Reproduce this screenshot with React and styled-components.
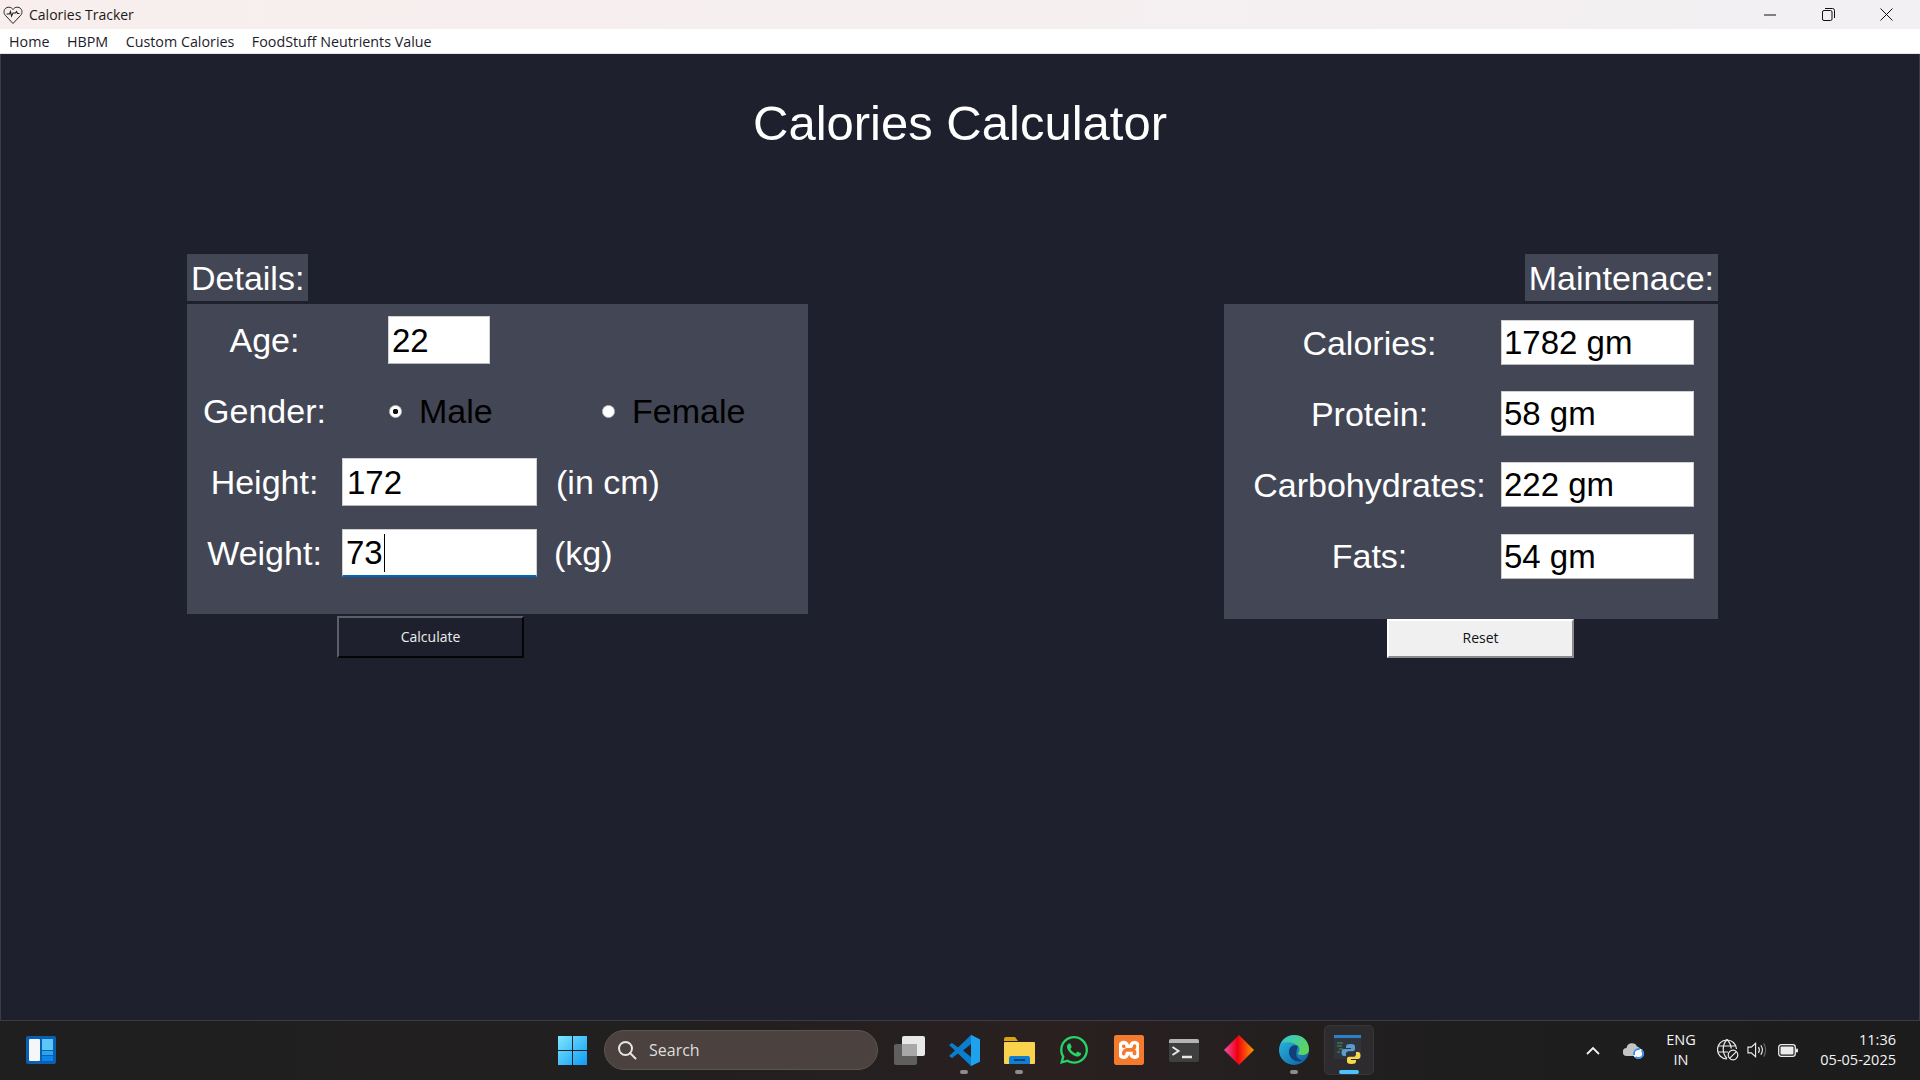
import React from 'react';
import styled, { createGlobalStyle } from 'styled-components';
import { FaWhatsapp } from 'react-icons/fa';
import { SiXampp } from 'react-icons/si';

const GlobalStyle = createGlobalStyle`
  html, body { margin: 0; padding: 0; height: 100%; background: #1e212d; }
  #root { height: 100%; }
  * { box-sizing: border-box; }
`;

const uiFont = `'Open Sans', 'Noto Sans', sans-serif`;
const formFont = `'Liberation Sans', Arial, sans-serif`;

const Page = styled.div`
  width: 1920px;
  height: 1080px;
  display: flex;
  flex-direction: column;
  overflow: hidden;
`;

const TitleBar = styled.div`
  height: 29px;
  display: flex;
  align-items: center;
  padding-left: 3px;
  background: linear-gradient(90deg, #f8eeee 0%, #f6efef 40%, #f2f0f3 100%);
  font-family: ${uiFont};
  font-size: 14px;
  color: #1a1a1a;
`;

const AppTitle = styled.span`
  margin-left: 6px;
`;

const WindowControls = styled.div`
  margin-left: auto;
  padding-right: 5px;
  display: flex;
  height: 100%;
`;

const WindowButton = styled.div`
  width: 58px;
  height: 100%;
  display: flex;
  align-items: center;
  justify-content: center;
`;

const MenuBar = styled.div`
  height: 25px;
  display: flex;
  align-items: center;
  gap: 17.500px;
  padding-left: 9px;
  background: #fff;
  border-bottom: 1px solid #e4e4e4;
  font-family: ${uiFont};
  font-size: 14.300px;
  color: #1c1c2c;
`;

const Content = styled.main`
  flex: 1;
  padding-top: 40px;
  background: #1e212d;
  box-shadow: inset 1px 0 0 #3a3c46, inset -1px 0 0 #3a3c46;
`;

const Heading = styled.h1`
  margin: 0 0 102px;
  height: 58px;
  line-height: 58px;
  text-align: center;
  font-family: ${formFont};
  font-weight: 400;
  font-size: 49px;
  color: #fff;
`;

const Columns = styled.div`
  padding: 0 202px 0 187px;
  display: flex;
  justify-content: space-between;
`;

const Column = styled.section`
  width: ${p => p.$width}px;
  display: flex;
  flex-direction: column;
`;

const Tag = styled.div`
  height: 47px;
  align-self: ${p => (p.$end ? 'flex-end' : 'flex-start')};
  padding: 1px 4px 0;
  display: flex;
  align-items: center;
  background: #434654;
  font-family: ${formFont};
  font-size: 34px;
  color: #fff;
`;

const Panel = styled.div`
  margin-top: 3px;
  height: ${p => p.$height}px;
  padding-top: ${p => p.$top}px;
  padding-left: ${p => p.$left || 0}px;
  display: flex;
  flex-direction: column;
  gap: ${p => p.$gap}px;
  background: #434654;
  font-family: ${formFont};
  font-size: 34px;
`;

const Row = styled.div`
  height: ${p => p.$height}px;
  display: flex;
  align-items: center;
`;

const Label = styled.div`
  width: ${p => p.$width}px;
  flex-shrink: 0;
  padding-top: 1px;
  text-align: center;
  color: #fff;
  white-space: nowrap;
`;

const Field = styled.div`
  width: ${p => p.$width}px;
  height: 100%;
  margin-left: ${p => p.$indent || 0}px;
  padding: 1px 0 0 ${p => p.$pad || 2}px;
  display: flex;
  align-items: center;
  background: #fff;
  color: #000;
  font-size: 33px;
  border: 1px solid #d0d0d0;
  border-bottom: ${p => (p.$focused ? '2px solid #0067c0' : '1px solid #b8b8b8')};
  white-space: nowrap;
`;

const Caret = styled.span`
  width: 1px;
  height: 38px;
  margin-left: 1px;
  background: #000;
`;

const Unit = styled.span`
  margin-left: ${p => p.$gap}px;
  padding-top: 1px;
  color: #fff;
`;

const RadioOption = styled.div`
  width: ${p => p.$width}px;
  margin-left: ${p => p.$indent || 0}px;
  padding: 1px 0 0 1px;
  display: flex;
  align-items: center;
  gap: 17px;
  color: #000;
`;

const RadioDot = styled.span`
  width: 13px;
  height: 13px;
  border-radius: 50%;
  background: radial-gradient(circle, ${p => (p.$checked ? '#111 0 2.500px, #fff 3px' : '#fff 0 5px')});
  border: 1px solid #c4c4c4;
  flex-shrink: 0;
`;

const Button = styled.div`
  width: 187px;
  height: ${p => p.$height}px;
  margin-top: ${p => p.$top}px;
  margin-left: ${p => p.$left}px;
  padding-bottom: 2px;
  display: flex;
  align-items: center;
  justify-content: center;
  font-family: ${uiFont};
  font-size: 14px;
  color: ${p => (p.$light ? '#111' : '#eee')};
  background: ${p => (p.$light ? '#f0f0f0' : '#1e212d')};
  border: 2px solid;
  border-color: ${p => (p.$light ? '#fff #8a8a8a #8a8a8a #fff' : '#5c5e68 #050505 #050505 #5c5e68')};
`;

const Taskbar = styled.footer`
  height: 60px;
  display: flex;
  align-items: center;
  padding: 0 0 1px 26px;
  background: linear-gradient(90deg, #1f1f1f 0%, #221f1f 35%, #2a2020 55%, #1f1e1e 75%, #1c1c1c 100%);
  border-top: 1px solid #3c3c3c;
  font-family: ${uiFont};
`;

const CenterGroup = styled.div`
  margin-left: 502px;
  display: flex;
  align-items: center;
`;

const SearchBox = styled.div`
  width: 274px;
  height: 40px;
  margin: 0 3.500px 0 17px;
  padding-left: 12px;
  display: flex;
  align-items: center;
  gap: 12px;
  border-radius: 20px;
  background: #4b4240;
  border: 1px solid #5c5452;
  font-size: 16px;
  color: #ddd;
`;

const AppSlot = styled.div`
  position: relative;
  width: 55px;
  height: 50px;
  display: flex;
  align-items: center;
  justify-content: center;
  border-radius: 5px;
  &::before {
    content: '';
    position: absolute;
    inset: 0 2.500px;
    border-radius: 5px;
    background: ${p => (p.$active ? '#2e2b2e' : 'transparent')};
    border: 1px solid ${p => (p.$active ? '#393639' : 'transparent')};
  }
  &::after {
    content: '';
    display: ${p => (p.$open || p.$active ? 'block' : 'none')};
    position: absolute;
    bottom: 1px;
    left: 50%;
    transform: translateX(-50%);
    width: ${p => (p.$active ? 20 : 8)}px;
    height: 4px;
    border-radius: 2px;
    background: ${p => (p.$active ? '#4cc2ff' : '#8d8d8d')};
  }
  svg { position: relative; }
`;

const Tray = styled.div`
  margin-left: auto;
  padding-right: 24px;
  display: flex;
  align-items: center;
  color: #f4f4f4;
`;

const TraySlot = styled.div`
  width: ${p => p.$width}px;
  display: flex;
  align-items: center;
  justify-content: center;
`;

const StackedText = styled.div`
  width: ${p => p.$width}px;
  display: flex;
  flex-direction: column;
  align-items: ${p => (p.$right ? 'flex-end' : 'center')};
  font-size: 14.500px;
  line-height: 20px;
  white-space: nowrap;
`;

const AppLogo = () => (
  <svg width="20" height="20" viewBox="0 0 20 20" fill="none" stroke="#222" strokeWidth="1">
    <path d="M10 18.500 2.200 10.200C.3 8 .8 4.500 3 3c2.500-1.500 5.500-.8 7 1.500C11.500 2.200 14.500 1.500 17 3c2.200 1.500 2.700 5 .8 7.200L10 18.500z" />
    <path d="M3.500 9h3l1-2.500 1 4.500 1.500-3h2.500l1-1.500 1 2H16.500" strokeWidth="1.100" />
  </svg>
);

const MinimizeIcon = () => (
  <svg width="12" height="12" viewBox="0 0 12 12"><path d="M0 6h12" stroke="#111" strokeWidth="1" /></svg>
);
const RestoreIcon = () => (
  <svg width="13" height="13" viewBox="0 0 13 13" fill="none" stroke="#111" strokeWidth="1">
    <rect x="0.500" y="2.500" width="9.500" height="10" rx="1.500" />
    <path d="M3 .5h7.500a2 2 0 0 1 2 2V10" />
  </svg>
);
const CloseIcon = () => (
  <svg width="13" height="13" viewBox="0 0 13 13"><path d="M.5.5l12 12M12.500.5l-12 12" stroke="#111" strokeWidth="1" /></svg>
);

const WidgetsIcon = () => (
  <svg width="30" height="28" viewBox="0 0 30 28">
    <rect width="30" height="28" rx="2" fill="#0a5fb4" />
    <rect x="3" y="3" width="11" height="22" rx="1" fill="#f4f6f8" />
    <rect x="16" y="3" width="11" height="11" fill="#5cc6f6" />
    <rect x="16" y="15" width="11" height="4" fill="#2ba4ee" />
    <rect x="16" y="20" width="11" height="5" fill="#0d84e8" />
  </svg>
);

const StartIcon = () => (
  <svg width="29" height="29" viewBox="0 0 29 29">
    <defs>
      <linearGradient id="startA" x1="0" y1="0" x2="1" y2="1">
        <stop offset="0" stopColor="#7fe6ff" />
        <stop offset="1" stopColor="#0c9bf5" />
      </linearGradient>
    </defs>
    <path d="M0 0h14v14H0zM15 0h14v14H15zM0 15h14v14H0zM15 15h14v14H15z" fill="url(#startA)" />
  </svg>
);

const SearchIcon = () => (
  <svg width="20" height="20" viewBox="0 0 20 20" fill="none" stroke="#e6e6e6" strokeWidth="2">
    <circle cx="8.500" cy="8.500" r="6.500" />
    <path d="M13 13l5.500 5.500" strokeLinecap="round" />
  </svg>
);

const TaskViewIcon = () => (
  <svg width="31" height="29" viewBox="0 0 31 29">
    <rect x="8" y="0" width="23" height="20" rx="2" fill="#e8e8e8" />
    <rect x="0" y="8" width="23" height="21" rx="2" fill="#5f5f5f" />
    <rect x="8" y="8" width="15" height="12" fill="#a8a8a8" />
  </svg>
);

const VsCodeIcon = () => (
  <svg width="31" height="31" viewBox="0 0 31 31">
    <path d="M22 0l9 4.500v22L22 31 9 18.500 3 23 0 21l6-5.500L0 10l3-2 6 4.500L22 0zm0 9l-8 6.500 8 6.500V9z" fill="#0a7fd0" />
    <path d="M22 0l9 4.500v22L22 31V0z" fill="#1ea2ee" />
  </svg>
);

const ExplorerIcon = () => (
  <svg width="31" height="27" viewBox="0 0 31 27">
    <path d="M0 2a2 2 0 0 1 2-2h9l3 4H0z" fill="#d9a213" />
    <rect x="0" y="5" width="31" height="22" rx="1" fill="#f9d34e" />
    <path d="M5 27v-6a2 2 0 0 1 2-2h17a2 2 0 0 1 2 2v6z" fill="#0f7fd6" />
    <rect x="10" y="22" width="11" height="2" fill="#06406f" />
  </svg>
);

const DiamondIcon = () => (
  <svg width="30" height="30" viewBox="0 0 30 30">
    <defs>
      <linearGradient id="diamondA" x1="0" y1="0" x2="1" y2="0">
        <stop offset="0" stopColor="#f050b0" />
        <stop offset="0.450" stopColor="#f00010" />
        <stop offset="1" stopColor="#ff9a00" />
      </linearGradient>
    </defs>
    <path d="M15 0l15 15-15 15L0 15z" fill="url(#diamondA)" />
  </svg>
);

const TerminalIcon = () => (
  <svg width="30" height="23" viewBox="0 0 30 23">
    <rect width="30" height="23" rx="2" fill="#3f3f3f" />
    <path d="M0 2a2 2 0 0 1 2-2h26a2 2 0 0 1 2 2v2H0z" fill="#b5b5b5" />
    <path d="M3.500 8l6 4-6 4" fill="none" stroke="#e8e8e8" strokeWidth="2" />
    <path d="M13 18h10" stroke="#e8e8e8" strokeWidth="2.500" />
  </svg>
);

const XamppIcon = () => (
  <svg width="30" height="30" viewBox="0 0 30 30">
    <rect width="30" height="30" rx="3" fill="#f47b2d" />
    <rect x="5" y="5" width="20" height="20" fill="#fff" />
    <SiXampp x="0" y="0" size={30} color="#f47b2d" />
  </svg>
);

const EdgeIcon = () => (
  <svg width="30" height="30" viewBox="0 0 30 30">
    <defs>
      <linearGradient id="edgeA" x1="0" y1="0" x2="1" y2="1">
        <stop offset="0" stopColor="#2bbfe0" />
        <stop offset="1" stopColor="#0c59a4" />
      </linearGradient>
      <linearGradient id="edgeB" x1="0" y1="0" x2="1" y2="0.600">
        <stop offset="0" stopColor="#31c5d8" />
        <stop offset="1" stopColor="#5fd35a" />
      </linearGradient>
    </defs>
    <circle cx="15" cy="15" r="15" fill="url(#edgeA)" />
    <path d="M2 8C6 1 14-1 21 1c6 2 9 8 9 14 0 3-3 5-7 5-3 0-4-1-4-2 2-2 2-5 0-7C14 6 6 7 2 8z" fill="url(#edgeB)" />
    <path d="M19 11c-4-2-9 0-9 6 0 6 6 11 13 9 1-.5-3-1-5-4-1-2-1-5 1-11z" fill="#123f7a" />
  </svg>
);

const PythonIcon = () => (
  <svg width="30" height="30" viewBox="0 0 30 30">
    <rect x="0" y="1" width="27" height="23" fill="#30343c" />
    <rect x="0" y="0" width="27" height="3" fill="#2f7fc8" />
    <path d="M3 8h6M3 11h5M5 14h4M3 17h3" stroke="#3f9a55" strokeWidth="1" />
    <path d="M16.500 9c-3 0-4.500 .8-4.500 2.500V13h5v1h-7c-1.800 0-2.500 1.500-2.500 3.500S8.200 21 10 21h2v-2.200c0-1.600 1.200-2.600 2.800-2.600h4c1.300 0 2.200-.9 2.200-2.200v-2.500C21 9.800 19.500 9 16.500 9z" fill="#5b9bd0" />
    <path d="M17.500 29c3 0 4.500-.8 4.500-2.500V25h-5v-1h7c1.800 0 2.500-1.500 2.500-3.500S25.800 17 24 17h-2v2.200c0 1.600-1.200 2.600-2.800 2.600h-4c-1.300 0-2.200 .9-2.200 2.200v2.500c0 1.700 1.500 2.500 4.500 2.500z" fill="#f8d64e" />
  </svg>
);

const ChevronIcon = () => (
  <svg width="14" height="9" viewBox="0 0 14 9" fill="none" stroke="#f2f2f2" strokeWidth="1.800">
    <path d="M1 8l6-6 6 6" />
  </svg>
);

const CloudSyncIcon = () => (
  <svg width="21" height="18" viewBox="0 0 21 18">
    <path d="M4 15a4 4 0 0 1-.5-8A5.500 5.500 0 0 1 14 5.500a4 4 0 0 1 3 4.500v5z" fill="#c4c4c4" />
    <circle cx="15.500" cy="12.500" r="5.300" fill="#fff" />
    <circle cx="15.500" cy="12.500" r="4.500" fill="none" stroke="#2f8fe8" strokeWidth="1.800" strokeDasharray="10 2" />
  </svg>
);

const GlobeOffIcon = () => (
  <svg width="22" height="22" viewBox="0 0 22 22" fill="none" stroke="#ececec" strokeWidth="1.200">
    <path d="M10 20a9.500 9.500 0 1 1 9.500-10" />
    <path d="M10 .5c-5 5-5 14 0 19M10 .5c3 3 4 6 4.200 9M1 7h18M1 13h10" />
    <circle cx="16" cy="16" r="4.800" fill="#1d1d1d" />
    <path d="M12.800 19.200l6.400-6.400" />
  </svg>
);

const VolumeIcon = () => (
  <svg width="21" height="18" viewBox="0 0 21 18" fill="none" stroke="#ececec" strokeWidth="1.200">
    <path d="M1 6h3.500L9 2v14l-4.500-4H1z" />
    <path d="M12 6c1.200 1.800 1.200 4.200 0 6M14.500 4c2 3 2 7 0 10" />
    <path d="M17.500 2c2.700 4 2.700 10 0 14" stroke="#666" />
  </svg>
);

const BatteryIcon = () => (
  <svg width="20" height="13" viewBox="0 0 20 13">
    <rect x="0.700" y="0.700" width="16.600" height="11.600" rx="2.500" fill="none" stroke="#ececec" strokeWidth="1.300" />
    <rect x="2.500" y="2.500" width="13" height="8" rx="1" fill="#ececec" />
    <rect x="18" y="4.500" width="2" height="4" rx="1" fill="#ececec" />
  </svg>
);

const results = [
  ['Calories:', '1782 gm'],
  ['Protein:', '58 gm'],
  ['Carbohydrates:', '222 gm'],
  ['Fats:', '54 gm'],
];

const App = () => (
  <Page>
    <GlobalStyle />
    <TitleBar>
      <AppLogo />
      <AppTitle>Calories Tracker</AppTitle>
      <WindowControls>
        <WindowButton><MinimizeIcon /></WindowButton>
        <WindowButton><RestoreIcon /></WindowButton>
        <WindowButton><CloseIcon /></WindowButton>
      </WindowControls>
    </TitleBar>
    <MenuBar>
      <span>Home</span>
      <span>HBPM</span>
      <span>Custom Calories</span>
      <span>FoodStuff Neutrients Value</span>
    </MenuBar>
    <Content>
      <Heading>Calories Calculator</Heading>
      <Columns>
        <Column $width={621}>
          <Tag>Details:</Tag>
          <Panel $height={310} $top={12} $gap={23}>
            <Row $height={48}>
              <Label $width={155}>Age:</Label>
              <Field $width={102} $indent={46} $pad={3}>22</Field>
            </Row>
            <Row $height={48}>
              <Label $width={155}>Gender:</Label>
              <RadioOption $width={213} $indent={46}><RadioDot $checked />Male</RadioOption>
              <RadioOption $width={150}><RadioDot />Female</RadioOption>
            </Row>
            <Row $height={48}>
              <Label $width={155}>Height:</Label>
              <Field $width={195} $pad={4}>172</Field>
              <Unit $gap={19}>(in cm)</Unit>
            </Row>
            <Row $height={48}>
              <Label $width={155}>Weight:</Label>
              <Field $width={195} $pad={3} $focused>73<Caret /></Field>
              <Unit $gap={17}>(kg)</Unit>
            </Row>
          </Panel>
          <Button $height={42} $top={2} $left={150}>Calculate</Button>
        </Column>
        <Column $width={494}>
          <Tag $end>Maintenace:</Tag>
          <Panel $height={315} $top={16} $gap={26.200} $left={29}>
            {results.map(([name, value]) => (
              <Row $height={45} key={name}>
                <Label $width={233}>{name}</Label>
                <Field $width={193} $indent={15}>{value}</Field>
              </Row>
            ))}
          </Panel>
          <Button $light $height={39} $top={0} $left={163}>Reset</Button>
        </Column>
      </Columns>
    </Content>
    <Taskbar>
      <WidgetsIcon />
      <CenterGroup>
        <StartIcon />
        <SearchBox><SearchIcon />Search</SearchBox>
        <AppSlot><TaskViewIcon /></AppSlot>
        <AppSlot $open><VsCodeIcon /></AppSlot>
        <AppSlot $open><ExplorerIcon /></AppSlot>
        <AppSlot><FaWhatsapp size={32} color="#25d366" /></AppSlot>
        <AppSlot><XamppIcon /></AppSlot>
        <AppSlot><TerminalIcon /></AppSlot>
        <AppSlot><DiamondIcon /></AppSlot>
        <AppSlot $open><EdgeIcon /></AppSlot>
        <AppSlot $active><PythonIcon /></AppSlot>
      </CenterGroup>
      <Tray>
        <TraySlot $width={40}><ChevronIcon /></TraySlot>
        <TraySlot $width={40}><CloudSyncIcon /></TraySlot>
        <StackedText $width={56}><span>ENG</span><span>IN</span></StackedText>
        <TraySlot $width={38}><GlobeOffIcon /></TraySlot>
        <TraySlot $width={20}><VolumeIcon /></TraySlot>
        <TraySlot $width={42}><BatteryIcon /></TraySlot>
        <StackedText $width={87} $right><span>11:36</span><span>05-05-2025</span></StackedText>
      </Tray>
    </Taskbar>
  </Page>
);

export default App;
